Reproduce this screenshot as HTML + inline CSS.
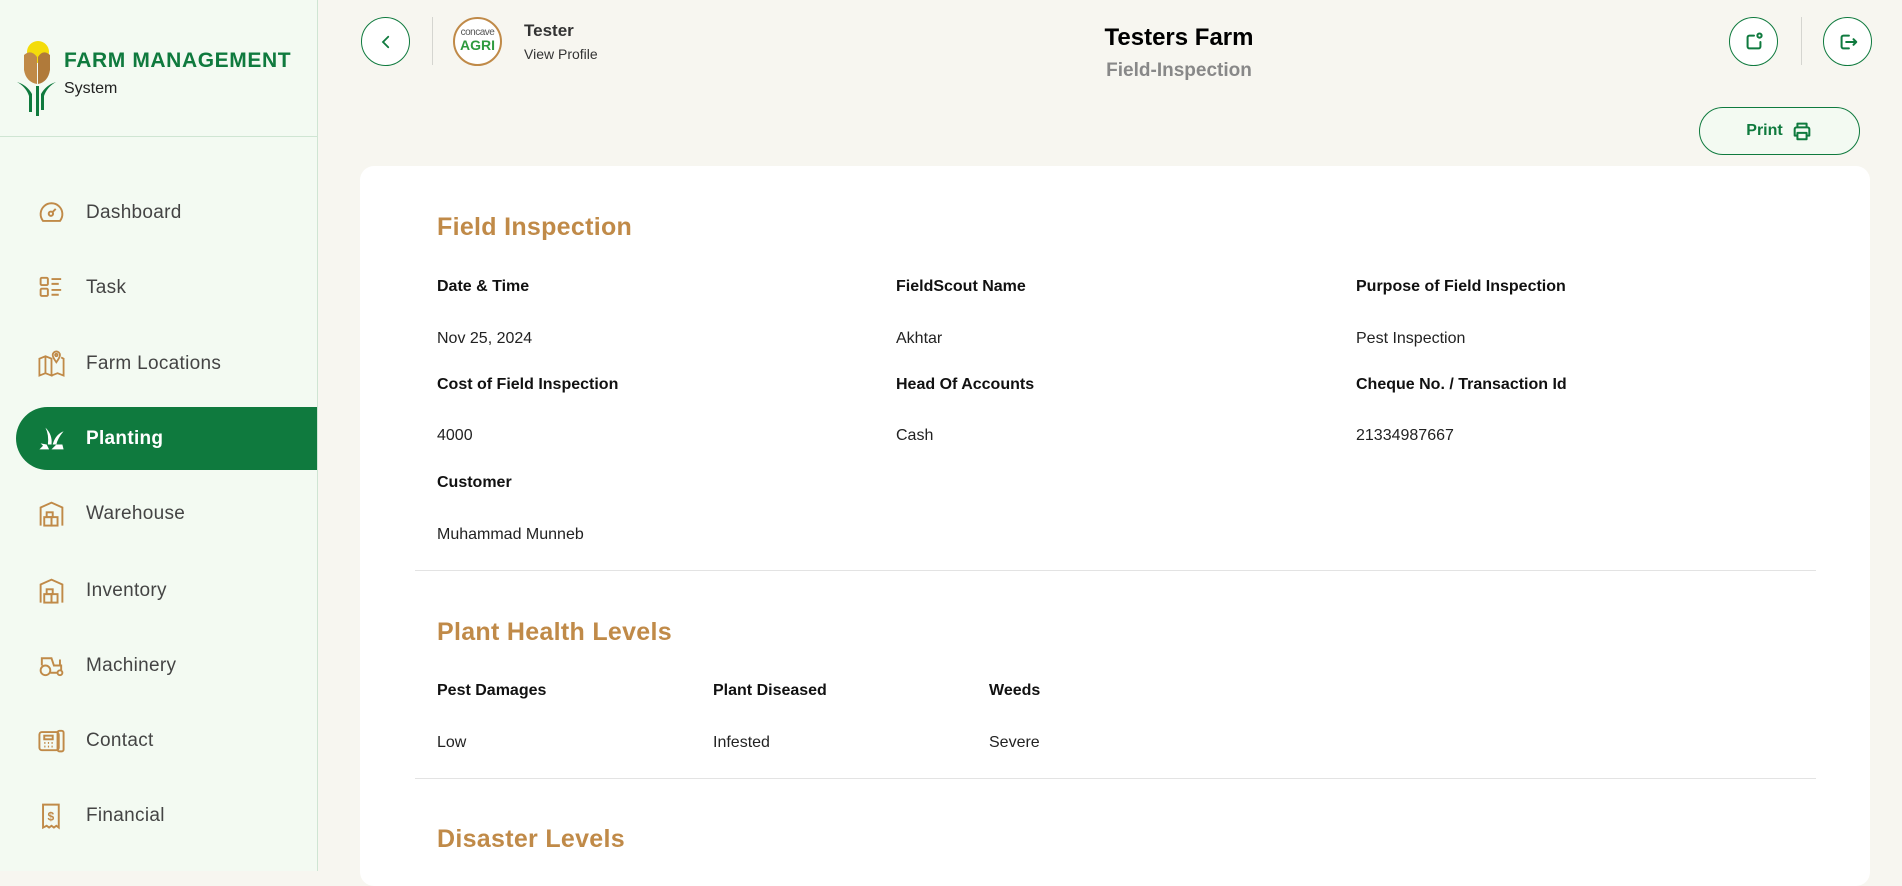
<!DOCTYPE html>
<html><head><meta charset="utf-8"><style>
*{box-sizing:border-box;margin:0;padding:0}
body{width:1902px;height:871px;overflow:hidden;background:#f7f6f0;font-family:"Liberation Sans",sans-serif;position:relative}
.sb{position:absolute;left:0;top:0;width:318px;height:871px;background:#f3faf2;border-right:1px solid #cfe5d3}
.sb .hr{position:absolute;left:0;top:136px;width:317px;height:1px;background:#cfe5d3}
.brand{position:absolute;left:64px;top:49px;color:#0f7a3e;font-weight:bold;font-size:21px;letter-spacing:.6px}
.sys{position:absolute;left:64px;top:80px;font-size:16px;color:#222}
.nav{position:absolute;left:0;width:317px;height:63px;display:flex;align-items:center}
.nav svg{position:absolute;left:37px;width:29px;height:29px}
.nav span{position:absolute;left:86px;font-size:19px;color:#444;letter-spacing:.3px}
.nav.act{left:16px;width:301px;background:#0f7a3e;border-radius:32px 0 0 32px}
.nav.act svg{left:21px}.nav.act span{left:70px;color:#fff;font-weight:bold}
.circ{position:absolute;width:49px;height:49px;border:1.5px solid #0f7a3e;border-radius:50%;background:#fff;display:flex;align-items:center;justify-content:center}
.vd{position:absolute;width:1px;height:48px;background:#d5d5d0}
.card{position:absolute;left:360px;top:166px;width:1510px;height:720px;background:#fff;border-radius:14px}
.h{position:absolute;color:#c08a48;font-weight:bold;font-size:25px;letter-spacing:.3px}
.l{position:absolute;font-weight:bold;font-size:16px;color:#111}
.v{position:absolute;font-size:16px;color:#222}
.dv{position:absolute;left:415px;width:1401px;height:1px;background:#e3e3e3}
</style></head><body>
<div class="sb">
<svg style="position:absolute;left:16px;top:38px" width="40" height="78" viewBox="0 0 40 78">
<circle cx="22" cy="14" r="11" fill="#f4dc0a"/>
<path d="M8 17 Q15 11 21 19 L21 46 Q10 44 8 32Z" fill="#c08a48"/>
<path d="M34 17 Q27 11 22 19 L22 46 Q32 44 34 32Z" fill="#b07a3a"/>
<path d="M1 44 Q10 49 13 58 L13 74 L16 74 L16 56 Q11 47 1 44Z" fill="#0f7a3e"/>
<path d="M40 44 Q31 49 28 58 L28 72 L25 72 L25 56 Q30 47 40 44Z" fill="#0f7a3e"/>
<rect x="20" y="48" width="3" height="30" fill="#0f7a3e"/>
</svg>
<div class="brand">FARM MANAGEMENT</div><div class="sys">System</div>
<div class="hr"></div>
<div class="nav" style="top:181px"><svg viewBox="0 0 24 24" fill="none" stroke="#c08a48" stroke-width="1.6"><path d="M5 19 A9 9 0 1 1 19 19Z" stroke-linejoin="round"/><circle cx="11.5" cy="13" r="1.8"/><path d="M13 11.5l2.5-2.5"/></svg><span>Dashboard</span></div>
<div class="nav" style="top:256px"><svg viewBox="0 0 24 24" fill="none" stroke="#c08a48" stroke-width="1.6"><rect x="3" y="4" width="6" height="6" rx="1"/><rect x="3" y="13" width="6" height="6" rx="1"/><path d="M12 5h8M12 9h6M12 14h8M12 18h6"/></svg><span>Task</span></div>
<div class="nav" style="top:332px"><svg viewBox="0 0 24 24" fill="none" stroke="#c08a48" stroke-width="1.5"><path d="M2 8l5-2 5 2v14l-5-2-5 2zM7 6v14M12 22l5-2 5 2V8l-2-1"/><path d="M16 11c-2-3-3-4-3-6a3 3 0 0 1 6 0c0 2-1 3-3 6z"/><circle cx="16" cy="5" r="1"/></svg><span>Farm Locations</span></div>
<div class="nav act" style="top:407px"><svg viewBox="0 0 24 24" fill="#fff"><path d="M2 21h8l-2-4-5-1 2 2zM12 21h10l-1-4-5 0zM9 17 Q10 9 7 3 Q13 9 12 17zM13 17 Q15 9 22 6 Q17 12 16 17z"/></svg><span>Planting</span></div>
<div class="nav" style="top:482px"><svg viewBox="0 0 24 24" fill="none" stroke="#c08a48" stroke-width="1.6"><path d="M3 22V7l9-4 9 4v15"/><rect x="6" y="15" width="6" height="7"/><rect x="12" y="15" width="5" height="7"/><rect x="8" y="11" width="5" height="4"/></svg><span>Warehouse</span></div>
<div class="nav" style="top:559px"><svg viewBox="0 0 24 24" fill="none" stroke="#c08a48" stroke-width="1.6"><path d="M3 22V7l9-4 9 4v15"/><rect x="6" y="15" width="6" height="7"/><rect x="12" y="15" width="5" height="7"/><rect x="8" y="11" width="5" height="4"/></svg><span>Inventory</span></div>
<div class="nav" style="top:634px"><svg viewBox="0 0 24 24" fill="none" stroke="#c08a48" stroke-width="1.6"><circle cx="7" cy="16" r="4"/><circle cx="19" cy="18" r="2"/><path d="M4 12V6h8l2 6h5V7M14 12h6v4M11 18h6"/></svg><span>Machinery</span></div>
<div class="nav" style="top:709px"><svg viewBox="0 0 24 24" fill="none" stroke="#c08a48" stroke-width="1.6"><rect x="2" y="5" width="16" height="15" rx="2"/><rect x="17" y="4" width="5" height="17" rx="1.5"/><rect x="6" y="8" width="7" height="3"/><path d="M6 14h1M9 14h1M12 14h1M6 17h1M9 17h1M12 17h1"/></svg><span>Contact</span></div>
<div class="nav" style="top:784px"><svg viewBox="0 0 24 24" fill="none" stroke="#c08a48" stroke-width="1.6"><path d="M5 3h13v19l-2-1.5-2 1.5-2-1.5-2 1.5-2-1.5-3 1.5z"/><text x="11.5" y="16" font-size="10" font-family="Liberation Sans" fill="#c08a48" stroke="none" text-anchor="middle" font-weight="bold">$</text></svg><span>Financial</span></div>
</div>

<div class="circ" style="left:361px;top:17px"><svg width="18" height="18" viewBox="0 0 24 24" fill="none" stroke="#0f7a3e" stroke-width="2.4" stroke-linecap="round"><path d="M15 5l-7 7 7 7"/></svg></div>
<div class="vd" style="left:432px;top:17px"></div>
<div style="position:absolute;left:453px;top:17px;width:49px;height:49px;border-radius:50%;border:2px solid #c08a48;background:#fff;overflow:hidden;text-align:center;font-family:'Liberation Sans Narrow','Liberation Sans',sans-serif">
<div style="font-size:10px;color:#555;margin-top:8px;letter-spacing:-.5px">concave</div><div style="font-size:14px;font-weight:bold;color:#2e9a3e;line-height:14px">AGRI</div></div>
<div style="position:absolute;left:524px;top:21px;font-size:17px;font-weight:bold;color:#333">Tester</div>
<div style="position:absolute;left:524px;top:46px;font-size:14px;color:#333">View Profile</div>
<div style="position:absolute;left:1079px;width:200px;text-align:center;top:24px;font-size:24px;font-weight:bold;color:#000">Testers Farm</div>
<div style="position:absolute;left:1079px;width:200px;text-align:center;top:60px;font-size:19px;font-weight:bold;color:#888">Field-Inspection</div>
<div class="circ" style="left:1729px;top:17px"><svg width="22" height="22" viewBox="0 0 24 24" fill="none" stroke="#0f7a3e" stroke-width="2.2" stroke-linecap="round"><path d="M12 5H7a2 2 0 0 0-2 2v10a2 2 0 0 0 2 2h10a2 2 0 0 0 2-2v-5"/><circle cx="18" cy="5" r="2.3"/></svg></div>
<div class="vd" style="left:1801px;top:17px"></div>
<div class="circ" style="left:1823px;top:17px"><svg width="22" height="22" viewBox="0 0 24 24" fill="none" stroke="#0f7a3e" stroke-width="2.2" stroke-linecap="round" stroke-linejoin="round"><path d="M13 5H7a2 2 0 0 0-2 2v10a2 2 0 0 0 2 2h6M10 12h11M18 9l3 3-3 3"/></svg></div>
<div style="position:absolute;left:1699px;top:107px;width:161px;height:48px;border:1.5px solid #0f7a3e;border-radius:24px;background:#f3faf2;display:flex;align-items:center;justify-content:center;gap:8px;color:#0f7a3e;font-weight:bold;font-size:16px">Print <svg width="22" height="22" viewBox="0 0 24 24" fill="none" stroke="#0f7a3e" stroke-width="2.2" stroke-linejoin="round"><path d="M7 8V4h10v4M7 17H4v-7a2 2 0 0 1 2-2h12a2 2 0 0 1 2 2v7h-3"/><rect x="7" y="14" width="10" height="7"/></svg></div>

<div class="card"></div>
<div class="h" style="left:437px;top:213px">Field Inspection</div>
<div class="l" style="left:437px;top:278px">Date &amp; Time</div>
<div class="l" style="left:896px;top:278px">FieldScout Name</div>
<div class="l" style="left:1356px;top:278px">Purpose of Field Inspection</div>
<div class="v" style="left:437px;top:330px">Nov 25, 2024</div>
<div class="v" style="left:896px;top:330px">Akhtar</div>
<div class="v" style="left:1356px;top:330px">Pest Inspection</div>
<div class="l" style="left:437px;top:376px">Cost of Field Inspection</div>
<div class="l" style="left:896px;top:376px">Head Of Accounts</div>
<div class="l" style="left:1356px;top:376px">Cheque No. / Transaction Id</div>
<div class="v" style="left:437px;top:427px">4000</div>
<div class="v" style="left:896px;top:427px">Cash</div>
<div class="v" style="left:1356px;top:427px">21334987667</div>
<div class="l" style="left:437px;top:474px">Customer</div>
<div class="v" style="left:437px;top:526px">Muhammad Munneb</div>
<div class="dv" style="top:570px"></div>
<div class="h" style="left:437px;top:618px">Plant Health Levels</div>
<div class="l" style="left:437px;top:682px">Pest Damages</div>
<div class="l" style="left:713px;top:682px">Plant Diseased</div>
<div class="l" style="left:989px;top:682px">Weeds</div>
<div class="v" style="left:437px;top:734px">Low</div>
<div class="v" style="left:713px;top:734px">Infested</div>
<div class="v" style="left:989px;top:734px">Severe</div>
<div class="dv" style="top:778px"></div>
<div class="h" style="left:437px;top:825px">Disaster Levels</div>
</body></html>
